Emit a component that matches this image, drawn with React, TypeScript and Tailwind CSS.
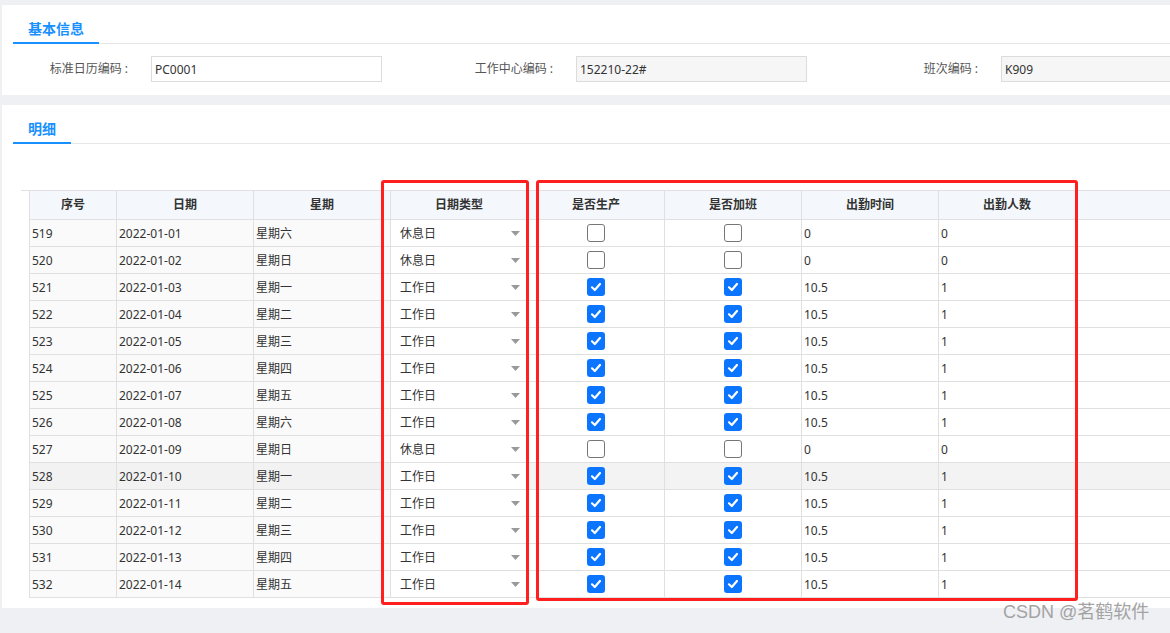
import React from 'react';

type Row = {
  no: number;
  date: string;
  week: string;
  work: boolean;
};

const rows: Row[] = [
  { no: 519, date: '2022-01-01', week: '星期六', work: false },
  { no: 520, date: '2022-01-02', week: '星期日', work: false },
  { no: 521, date: '2022-01-03', week: '星期一', work: true },
  { no: 522, date: '2022-01-04', week: '星期二', work: true },
  { no: 523, date: '2022-01-05', week: '星期三', work: true },
  { no: 524, date: '2022-01-06', week: '星期四', work: true },
  { no: 525, date: '2022-01-07', week: '星期五', work: true },
  { no: 526, date: '2022-01-08', week: '星期六', work: true },
  { no: 527, date: '2022-01-09', week: '星期日', work: false },
  { no: 528, date: '2022-01-10', week: '星期一', work: true },
  { no: 529, date: '2022-01-11', week: '星期二', work: true },
  { no: 530, date: '2022-01-12', week: '星期三', work: true },
  { no: 531, date: '2022-01-13', week: '星期四', work: true },
  { no: 532, date: '2022-01-14', week: '星期五', work: true },
];

const headers = ['日期', '星期', '日期类型', '是否生产', '是否加班', '出勤时间', '出勤人数'];

function Tab({ label }: { label: string }) {
  return (
    <div className="ml-[11px] flex h-[39px] items-end border-b border-[#e6e6e6]">
      <div className="-mb-px flex h-[30px] items-center border-b-2 border-[#1890ff] px-[15px] text-[14px] font-semibold text-[#1890ff]">
        {label}
      </div>
    </div>
  );
}

function Field({
  label,
  value,
  disabled,
}: {
  label: string;
  value: string;
  disabled?: boolean;
}) {
  return (
    <div className="mr-[74px] flex shrink-0 items-center">
      <div className="w-[120px] pr-[23px] text-right text-[12px] text-[#555]">{label}</div>
      <div
        className={`flex h-[26px] w-[231px] items-center border border-[#dcdcdc] px-[3px] pt-px text-[12px] text-[#333] ${
          disabled ? 'bg-[#f6f6f6]' : 'bg-white'
        }`}
      >
        {value}
      </div>
    </div>
  );
}

function CheckBox({ checked }: { checked: boolean }) {
  if (!checked) {
    return <span className="block h-[18px] w-[18px] rounded-[3px] border border-[#767676] bg-white" />;
  }
  return (
    <span className="flex h-[18px] w-[18px] items-center justify-center rounded-[3px] bg-[#0b75ff]">
      <svg width="12" height="12" viewBox="0 0 12 12" fill="none">
        <path d="M2 6.3 L4.8 9 L10 3" stroke="white" strokeWidth="2.2" strokeLinecap="round" strokeLinejoin="round" />
      </svg>
    </span>
  );
}

export default function App() {
  return (
    <div className="relative h-[633px] overflow-hidden bg-[#eff0f4] pt-[5px] pl-[2px] font-['Noto_Sans','Noto_Sans_CJK_SC',sans-serif]">
      {/* 基本信息 */}
      <section className="h-[90px] overflow-hidden bg-white">
        <Tab label="基本信息" />
        <div className="mt-[12px] flex pl-[29px]">
          <Field label="标准日历编码 :" value="PC0001" />
          <Field label="工作中心编码 :" value="152210-22#" disabled />
          <Field label="班次编码 :" value="K909" disabled />
        </div>
      </section>

      {/* 明细 */}
      <section className="relative mt-[10px] h-[503px] overflow-hidden bg-white">
        <Tab label="明细" />
        <div className="mt-[46px] ml-[19px] text-[12px] text-[#333]">
          {/* header */}
          <div className="flex h-[30px] border-t border-[#e0e0e0]">
            <div className="w-[8px] shrink-0" />
            <div className="flex flex-1 border-b border-[#e0e0e0] bg-[#f4f8fc] font-semibold">
              <div className="flex w-[87px] shrink-0 items-center justify-center border-l border-[#e0e0e0]">序号</div>
              {headers.map((h) => (
                <div key={h} className="flex w-[137px] shrink-0 items-center justify-center border-l border-[#e0e0e0]">
                  {h}
                </div>
              ))}
              <div className="flex-1 border-l border-[#e0e0e0]" />
            </div>
          </div>
          {/* body */}
          {rows.map((r, i) => {
            const hover = i === 9;
            const frozen = hover ? 'bg-[#f2f2f2]' : 'bg-[#fafafa]';
            const plain = hover ? 'bg-[#f3f3f3]' : 'bg-white';
            return (
              <div key={r.no} className="flex h-[27px]">
                <div className="w-[8px] shrink-0" />
                <div className="flex flex-1 border-b border-[#e0e0e0]">
                  <div className={`flex w-[87px] shrink-0 items-center border-l border-[#e0e0e0] pt-px pl-[2px] ${frozen}`}>{r.no}</div>
                  <div className={`flex w-[137px] shrink-0 items-center border-l border-[#e0e0e0] pt-px pl-[2px] ${frozen}`}>{r.date}</div>
                  <div className={`flex w-[137px] shrink-0 items-center border-l border-[#e0e0e0] pt-px pl-[2px] ${frozen}`}>{r.week}</div>
                  <div className="flex w-[137px] shrink-0 items-center justify-between border-l border-[#e0e0e0] bg-white pt-px pr-[7px] pl-[9px]">
                    <span>{r.work ? '工作日' : '休息日'}</span>
                    <svg width="9" height="5" viewBox="0 0 9 5">
                      <path d="M0 0 H9 L4.5 5 Z" fill="#999" />
                    </svg>
                  </div>
                  <div className={`flex w-[137px] shrink-0 items-center justify-center border-l border-[#e0e0e0] ${plain}`}>
                    <CheckBox checked={r.work} />
                  </div>
                  <div className={`flex w-[137px] shrink-0 items-center justify-center border-l border-[#e0e0e0] ${plain}`}>
                    <CheckBox checked={r.work} />
                  </div>
                  <div className={`flex w-[137px] shrink-0 items-center border-l border-[#e0e0e0] pt-px pl-[2px] ${plain}`}>
                    {r.work ? '10.5' : '0'}
                  </div>
                  <div className={`flex w-[137px] shrink-0 items-center border-l border-[#e0e0e0] pt-px pl-[2px] ${plain}`}>
                    {r.work ? '1' : '0'}
                  </div>
                  <div className={`flex-1 border-l border-[#e0e0e0] ${plain}`} />
                </div>
              </div>
            );
          })}
        </div>

        {/* red highlight boxes */}
        <div className="pointer-events-none absolute top-[75px] left-[379px] h-[425px] w-[148px] rounded-[3px] border-[3px] border-[#ff1f1f]" />
        <div className="pointer-events-none absolute top-[75px] left-[534px] h-[421px] w-[542px] rounded-[3px] border-[3px] border-[#ff1f1f]" />
      </section>

      <div className="pointer-events-none absolute top-[600px] left-[1003px] text-[18px] leading-[24px] text-[#a3a3a3] font-['Liberation_Sans','Noto_Sans_CJK_SC',sans-serif]">
        CSDN @茗鹤软件
      </div>
    </div>
  );
}
